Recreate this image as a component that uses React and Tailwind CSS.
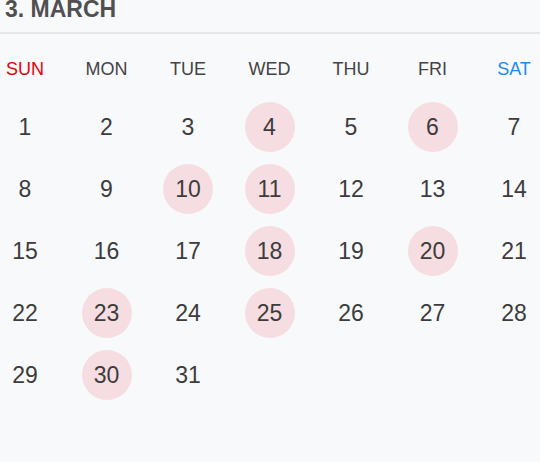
export default function App() {
  const names = ["SUN", "MON", "TUE", "WED", "THU", "FRI", "SAT"];
  const hl = new Set([4, 6, 10, 11, 18, 20, 23, 25, 30]);
  const cells = [];
  for (let i = 1; i <= 31; i++) cells.push(i);
  while (cells.length < 35) cells.push(null);
  return (
    <div className="w-[540px] h-[462px] bg-[#f8f9fb] text-[#444]" style={{ fontFamily: '"Liberation Sans", Arial, sans-serif' }}>
      <div className="h-[34px] border-b-2 border-[#e6e7ea] px-[5px]">
        <div className="text-[23px] font-bold leading-[19px] text-[#505050]">3. MARCH</div>
      </div>
      <div className="flex justify-between mt-[25px] w-[539px]">
        {names.map((n, i) => (
          <div key={n} className={`w-[50px] text-center text-[18px] leading-[20px] ${i === 0 ? "text-[#e8000b]" : i === 6 ? "text-[#1a8cf0]" : "text-[#444]"}`}>{n}</div>
        ))}
      </div>
      <div className="mt-[23px] flex flex-col gap-[12px] w-[539px]">
        {[0, 1, 2, 3, 4].map((r) => (
          <div key={r} className="flex justify-between">
            {cells.slice(r * 7, r * 7 + 7).map((d, i) => (
              <div key={i} className={`w-[50px] h-[50px] rounded-full flex items-center justify-center text-[23px] text-[#3c3c3c] ${d && hl.has(d) ? "bg-[#f6dde1]" : ""}`}>{d}</div>
            ))}
          </div>
        ))}
      </div>
    </div>
  );
}
